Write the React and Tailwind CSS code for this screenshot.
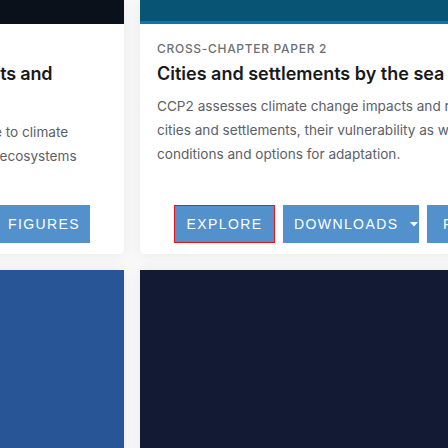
import React from "react";

function Caret() {
  return (
    <svg width="8" height="5" viewBox="0 0 8 5" className="ml-[12px] shrink-0">
      <path d="M0 0 L8 0 L4 4.5 Z" fill="white" />
    </svg>
  );
}

function Buttons({ focus }) {
  const btn =
    "h-[38px] flex items-center bg-[#5291cc] text-white text-[14px] tracking-[1.4px] uppercase shrink-0 font-['Liberation_Sans',Arial,sans-serif]";
  return (
    <div className="flex gap-2 pl-[34px] mt-auto shrink-0">
      <div className={`${btn} w-[101px] justify-center ${focus ? "border border-[#e8121b]" : ""}`}>Explore</div>
      <div className={`${btn} w-[136px] pl-[11px]`}>
        Downloads
        <Caret />
      </div>
      <div className={`${btn} w-[98px] pl-4`}>Figures</div>
    </div>
  );
}

function Card({ band, label, title, body, focus, titleClass = "" }) {
  return (
    <div className="w-[419px] h-[254px] shrink-0 bg-white rounded-b-[5px] shadow-[0_0_14px_rgba(0,0,0,0.06)] flex flex-col pb-[11px]">
      {band}
      <div className="px-[17px] pt-[17px] shrink-0">
        <div className="text-[12px] leading-[16px] tracking-[0.7px] font-medium text-[#6c7075] uppercase whitespace-nowrap">{label}</div>
        <div className={`mt-1 text-[18px] leading-[26px] font-semibold text-[#17191c] whitespace-nowrap ${titleClass}`}>
          {title.map((l, i) => (
            <div key={i} className="h-[26px]">{l}</div>
          ))}
        </div>
        <div className="mt-[7px] text-[13.6px] leading-[24px] text-[#5c6066] whitespace-nowrap">
          {body.map((l, i) => (
            <div key={i} className="h-[24px]">{l}</div>
          ))}
        </div>
      </div>
      <Buttons focus={focus} />
    </div>
  );
}

export default function App() {
  return (
    <div className="w-[448px] h-[448px] overflow-hidden bg-[#f8f8f8] font-['Inter',sans-serif]">
      <div className="flex gap-4 ml-[-295px]">
        <Card
          band={<div className="h-6 shrink-0 bg-[#0a111b]" />}
          label="Cross-Chapter Paper 1"
          title={["Biodiversity hotspots (land, coasts and", "oceans)"]}
          titleClass="tracking-[-0.2px]"
          body={[
            "and risks to biodiversity in the hotspots due to climate",
            "change, and its key risks to humans and to ecosystems",
            "in hotspots.",
          ]}
        />
        <Card
          band={<div className="h-6 shrink-0 bg-[#075475] border-b-[3px] border-[#0b78a8]" />}
          label="Cross-Chapter Paper 2"
          title={["Cities and settlements by the sea"]}
          body={[
            "CCP2 assesses climate change impacts and risks for",
            "cities and settlements, their vulnerability as well as",
            "conditions and options for adaptation.",
          ]}
          focus
        />
      </div>
      <div className="flex gap-4 ml-[-295px] mt-4">
        <div className="w-[419px] h-[200px] shrink-0 bg-[#285596] shadow-[0_0_14px_rgba(0,0,0,0.06)]" />
        <div className="w-[419px] h-[200px] shrink-0 bg-[#121b33] shadow-[0_0_14px_rgba(0,0,0,0.06)]" />
      </div>
    </div>
  );
}
